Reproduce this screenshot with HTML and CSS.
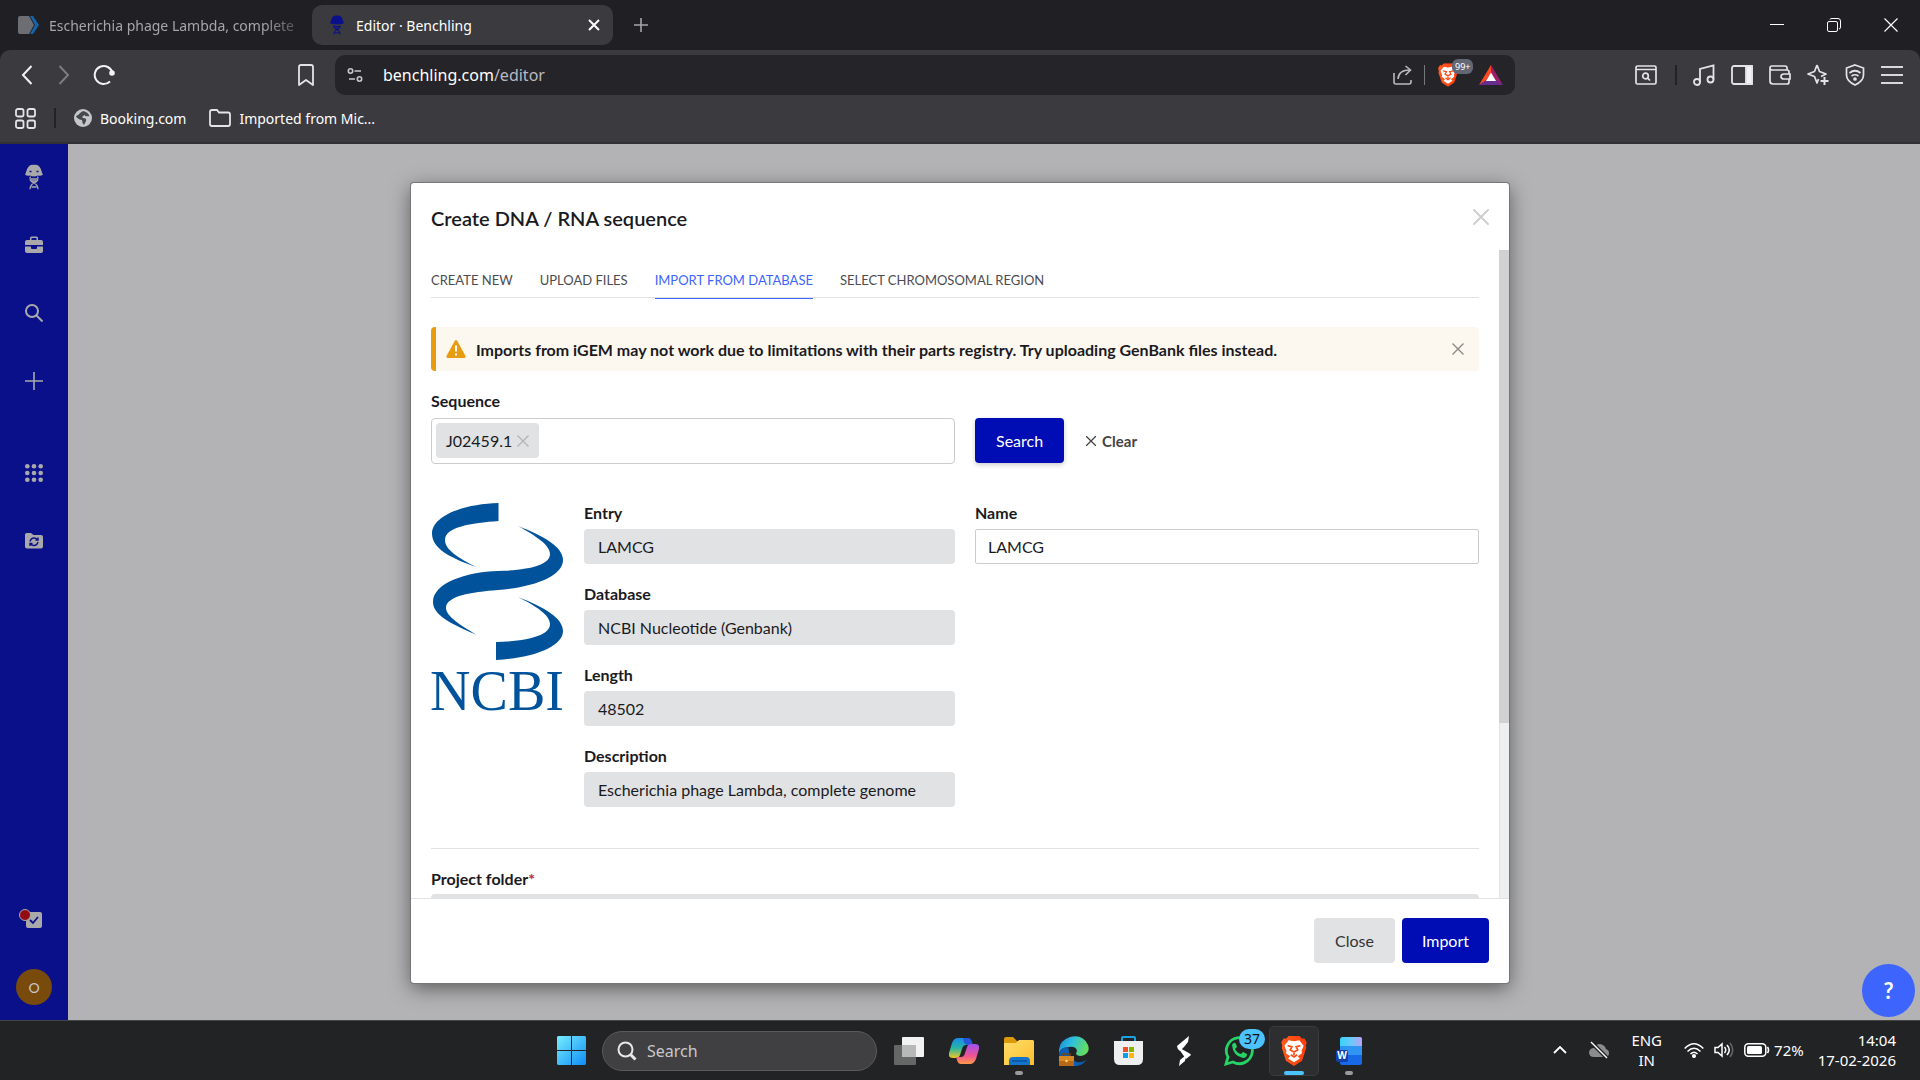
FILE: index.html
```
<!DOCTYPE html>
<html lang="en">
<head>
  <meta charset="utf-8">
  <title>Editor · Benchling</title>
  <link rel="stylesheet" href="styles.css">
</head>
<body>
  <!-- Browser tabs -->
  <header class="browser">
    <div class="tabs-row">
      <div class="tab">
        <svg class="tab-icon" width="22" height="20" viewBox="0 0 22 20"><path d="M2 1h9l5 9-5 9H2a2 2 0 0 1-2-2V3a2 2 0 0 1 2-2z" fill="#6d6e73"/><path d="M12 1h3l6 9-6 9h-3l5-9z" fill="#1763a8"/></svg>
        <span class="tab-title faded">Escherichia phage Lambda, complete</span>
      </div>
      <div class="tab active">
        <svg class="tab-icon" width="14" height="20" viewBox="0 0 18 25"><use href="#phage"/></svg>
        <span class="tab-title">Editor · Benchling</span>
        <button class="plain" aria-label="Close tab"><svg width="12" height="12" viewBox="0 0 12 12" stroke="#fff" stroke-width="2"><path d="M1 1l10 10M11 1L1 11"/></svg></button>
      </div>
      <button class="plain new-tab" aria-label="New tab"><svg width="14" height="14" viewBox="0 0 14 14" stroke="#a5a5aa" stroke-width="1.600"><path d="M7 0v14M0 7h14"/></svg></button>
      <div class="window-buttons">
        <button class="plain" aria-label="Minimize"><svg width="14" height="14" viewBox="0 0 14 14" stroke="#fff"><path d="M0 6.500h14"/></svg></button>
        <button class="plain" aria-label="Restore"><svg width="14" height="14" viewBox="0 0 14 14" stroke="#fff" fill="none"><rect x=".5" y="3.500" width="10" height="10" rx="1.500"/><path d="M3 1.500Q3 .5 5 .5h6q2.500 0 2.500 2.500v6q0 2-1.500 2"/></svg></button>
        <button class="plain" aria-label="Close"><svg width="14" height="14" viewBox="0 0 14 14" stroke="#fff" stroke-width="1.200"><path d="M.5.5l13 13M13.500.5l-13 13"/></svg></button>
      </div>
    </div>

    <!-- Address bar -->
    <div class="toolbar">
      <div class="nav-buttons">
        <button class="plain" aria-label="Back"><svg width="12" height="20" viewBox="0 0 12 20" fill="none" stroke="#f2f2f4" stroke-width="2"><path d="M10.500 1L2 10l8.500 9"/></svg></button>
        <button class="plain" aria-label="Forward"><svg width="12" height="20" viewBox="0 0 12 20" fill="none" stroke="#7b7b80" stroke-width="2"><path d="M2.500 1L11 10l-8.500 9"/></svg></button>
        <button class="plain" aria-label="Reload"><svg width="22" height="22" viewBox="0 0 22 22" fill="none" stroke="#f2f2f4" stroke-width="2"><path d="M17 17.500A9 9 0 1 1 19.500 9"/><circle cx="19" cy="9" r="1.800" fill="#f2f2f4"/></svg></button>
      </div>
      <button class="plain bookmark" aria-label="Bookmark"><svg width="16" height="22" viewBox="0 0 16 22" fill="none" stroke="#e4e4e8" stroke-width="1.800"><path d="M1 3q0-2 2-2h10q2 0 2 2v18l-7-5-7 5z" stroke-linejoin="round"/></svg></button>
      <div class="address">
        <svg width="16" height="14" viewBox="0 0 16 14" fill="none" stroke="#c8c8cd" stroke-width="1.600"><circle cx="3.500" cy="3" r="2.200"/><path d="M7.500 3H14M2 11h6"/><circle cx="12.500" cy="11" r="2.200"/></svg>
        <div class="url">benchling.com<span>/editor</span></div>
        <svg width="20" height="20" viewBox="0 0 20 20" fill="none" stroke="#b9b9bf" stroke-width="1.600"><path d="M1 8v9q0 2 2 2h13q2 0 2-2v-2M5 14Q5.500 5 17 5M12.500 1L17.500 5l-5 5"/></svg>
        <i class="rule light"></i>
        <div class="shield">
          <svg width="20" height="24" viewBox="0 0 24 28"><use href="#brave"/></svg>
          <span class="shield-count">99+</span>
        </div>
        <svg width="24" height="20" viewBox="0 0 24 20"><path d="M12 0L0 20l7-4 5-8z" fill="#ff4724"/><path d="M12 0l12 20-7-4-5-8z" fill="#9e1f63"/><path d="M0 20h24l-7-5H7z" fill="#662d91"/><path d="M12 7.500L7 16h10z" fill="#fff"/></svg>
      </div>
      <div class="extensions">
        <svg width="22" height="20" viewBox="0 0 22 20" fill="none" stroke="#e4e4e8" stroke-width="1.700"><rect x="1" y="1" width="20" height="18" rx="1.500"/><path d="M1 4.500h20M12.500 13l2.500 2.500"/><circle cx="10.500" cy="11" r="2.800"/></svg>
        <i class="rule"></i>
        <svg width="22" height="22" viewBox="0 0 22 22" fill="none" stroke="#e4e4e8" stroke-width="1.800"><circle cx="4" cy="18" r="3"/><circle cx="17.500" cy="15.500" r="3"/><path d="M7 18V5l13.500-3.500v14"/></svg>
        <svg width="22" height="20" viewBox="0 0 22 20" fill="none" stroke="#e4e4e8" stroke-width="1.800"><rect x="1" y="1" width="20" height="18" rx="2"/><path d="M15 1h6v18h-6z" fill="#f2f2f4"/></svg>
        <svg width="22" height="20" viewBox="0 0 22 20" fill="none" stroke="#e4e4e8" stroke-width="1.700"><path d="M1 4v12q0 3 3 3h14q2 0 2-2v-3M20 9V7q0-2-2-2H3Q1 5 1 3t2-2h13q2 0 2 2v2M21 9h-6q-3 0-3 2.500t3 2.500h6z"/></svg>
        <svg width="22" height="22" viewBox="0 0 22 22" fill="none" stroke="#e4e4e8" stroke-width="1.700" stroke-linejoin="round"><path d="M10 1l2.500 6.500L19 10l-5 2.500M10 1L7.500 7.500 1 10l6.500 2.500L10 19l1.500-4"/><path d="M17.500 13v8M13.500 17h8" stroke-width="2"/></svg>
        <svg width="20" height="22" viewBox="0 0 20 22" fill="none" stroke="#e4e4e8" stroke-width="1.700"><path d="M10 1l8.500 3v7q0 6-8.500 10Q1.500 17 1.500 11V4z"/><path d="M4.500 9q5.500-4.500 11 0M6.500 12q3.500-2.500 7 0"/><circle cx="10" cy="15" r="1" fill="#e4e4e8"/></svg>
        <svg width="22" height="18" viewBox="0 0 22 18" stroke="#d8d8dc" stroke-width="2"><path d="M0 1h22M0 9h22M0 17h22"/></svg>
      </div>
    </div>

    <nav class="bookmarks">
      <svg width="21" height="21" viewBox="0 0 21 21" fill="none" stroke="#e4e4e8" stroke-width="1.800"><rect x="1" y="1" width="7.500" height="7.500" rx="1.800"/><rect x="12.500" y="1" width="7.500" height="7.500" rx="1.800"/><rect x="1" y="12.500" width="7.500" height="7.500" rx="1.800"/><rect x="12.500" y="12.500" width="7.500" height="7.500" rx="1.800"/></svg>
      <i class="rule"></i>
      <a href="#"><svg width="18" height="18" viewBox="0 0 18 18"><circle cx="9" cy="9" r="9" fill="#c3c6ca"/><path d="M9 2q5 1 6.500 5-4 1-5-1Q7 8 9 9q4 0 3 3l-2 4q-2-2-2-5-5-1-6-4 3-1 4-3z" fill="#47484d"/></svg>Booking.com</a>
      <a href="#"><svg width="22" height="18" viewBox="0 0 22 18" fill="none" stroke="#e4e4e8" stroke-width="1.800"><path d="M1 3q0-2 2-2h5l2 2.500h9q2 0 2 2V15q0 2-2 2H3q-2 0-2-2z"/></svg>Imported from Mic...</a>
    </nav>
  </header>

  <!-- Benchling -->
  <div class="app">
    <nav class="sidebar">
      <a href="#" aria-label="Home"><svg width="18" height="26" viewBox="0 0 18 25"><use href="#phage"/></svg></a>
      <a href="#" aria-label="Projects"><svg width="18" height="18" viewBox="0 0 18 18" fill="currentColor"><path d="M5 4V2q0-1.500 1.500-1.500h5Q13 .5 13 2v2h3q2 0 2 2v3H0V6q0-2 2-2zm1.500 0h5V2h-5zM0 10.500h6V12q0 1 1 1h4q1 0 1-1v-1.500h6V15q0 2-2 2H2q-2 0-2-2z"/></svg></a>
      <a href="#" aria-label="Search"><svg width="18" height="18" viewBox="0 0 18 18" fill="none" stroke="currentColor" stroke-width="2"><circle cx="7" cy="7" r="6"/><path d="M11.500 11.500l6 6"/></svg></a>
      <a href="#" aria-label="Create"><svg width="18" height="18" viewBox="0 0 18 18" stroke="currentColor" stroke-width="1.600"><path d="M9 0v18M0 9h18"/></svg></a>
      <a href="#" aria-label="Apps" class="spaced"><svg width="18" height="18" viewBox="0 0 18 18" fill="currentColor"><circle cx="2.300" cy="2.300" r="2.300"/><circle cx="9" cy="2.300" r="2.300"/><circle cx="15.700" cy="2.300" r="2.300"/><circle cx="2.300" cy="9" r="2.300"/><circle cx="9" cy="9" r="2.300"/><circle cx="15.700" cy="9" r="2.300"/><circle cx="2.300" cy="15.700" r="2.300"/><circle cx="9" cy="15.700" r="2.300"/><circle cx="15.700" cy="15.700" r="2.300"/></svg></a>
      <a href="#" aria-label="Synced folders"><svg width="18" height="18" viewBox="0 0 18 18"><path d="M0 2.500Q0 1 1.500 1H6l2.500 2H16q2 0 2 2v9.500q0 2-2 2H2q-2 0-2-2z" fill="currentColor"/><path d="M5 9.500Q6 6 9 6q2 0 3.500 1.500M13 10q-1 3.500-4 3.500-2 0-3.500-1.500M13 5.500V8h-2.500M5 14v-2.500h2.500" fill="none" stroke="#0a1089" stroke-width="1.400"/></svg></a>
      <a href="#" aria-label="Tasks" class="tasks"><svg width="16" height="16" viewBox="0 0 16 16"><rect width="16" height="16" rx="2" fill="currentColor"/><path d="M4 8l3 3 5-6" fill="none" stroke="#0a1089" stroke-width="1.800"/></svg></a>
      <button class="avatar">O</button>
    </nav>

    <main class="stage">
      <section class="modal" role="dialog" aria-labelledby="modal-title">
        <div class="modal-header">
          <h1 id="modal-title">Create DNA / RNA sequence</h1>
          <button class="plain" aria-label="Close dialog"><svg width="16" height="16" viewBox="0 0 16 16" stroke="#ccc" stroke-width="1.800" stroke-linecap="round"><path d="M1 1l14 14M15 1L1 15"/></svg></button>
        </div>

        <div class="modal-middle">
          <div class="modal-body">
            <nav class="modal-tabs">
              <a href="#">CREATE NEW</a>
              <a href="#">UPLOAD FILES</a>
              <a href="#" class="selected">IMPORT FROM DATABASE</a>
              <a href="#">SELECT CHROMOSOMAL REGION</a>
            </nav>

            <div class="alert">
              <svg width="20" height="18" viewBox="0 0 20 18"><path d="M8.700 1q1.300-2 2.600 0l8 14.500q1 2.500-1.300 2.500H2Q-.3 18 .7 15.500z" fill="#e89c12"/><path d="M10 5.500v6M10 13.500v2" stroke="#fff" stroke-width="2"/></svg>
              <p>Imports from iGEM may not work due to limitations with their parts registry. Try uploading GenBank files instead.</p>
              <button class="plain" aria-label="Dismiss"><svg width="12" height="12" viewBox="0 0 12 12" stroke="#8d8a85" stroke-width="1.400"><path d="M.5.5l11 11M11.500.5l-11 11"/></svg></button>
            </div>

            <label for="sequence">Sequence</label>
            <div class="columns">
              <div class="token-box">
                <span class="token">J02459.1 <svg width="12" height="12" viewBox="0 0 12 12" stroke="#b4b4b6" stroke-width="1.300"><path d="M.5.5l11 11M11.500.5l-11 11"/></svg></span>
                <input type="text" id="sequence">
              </div>
              <div class="search-actions">
                <button class="btn primary raised">Search</button>
                <button class="plain clear"><svg width="10" height="10" viewBox="0 0 10 10" stroke="#444" stroke-width="1.300"><path d="M0 0l10 10M10 0L0 10"/></svg>Clear</button>
              </div>
            </div>

            <div class="columns result">
              <div class="entry">
                <svg class="ncbi" width="133" height="226" viewBox="0 0 133 226" fill="#00529b">
                  <path d="M67.500 1V19C40 21 14 25 14 38c0 10 14 18 31 27C20 56 1 47 1 31.500 1 14 32 2 67.500 1z"/>
                  <path d="M87 24c26 10 45 21 45 34 0 16-28 27-65 30C40 90 15 94 15 106c0 8 14 17 31 27C20 122 2 113 2 100 2 81 35 70 67 69c32-1 52-6 52-17 0-9-14-18-32-28z"/>
                  <path d="M87 95c26 10 45 21 45 34 0 15-28 27-67 29V140c34-1 54-7 54-18 0-9-14-18-32-27z"/>
                  <text x="66" y="208" text-anchor="middle">NCBI</text>
                </svg>
                <div class="fields">
                  <div class="field"><label for="entry">Entry</label><input type="text" id="entry" value="LAMCG" readonly></div>
                  <div class="field"><label for="database">Database</label><input type="text" id="database" value="NCBI Nucleotide (Genbank)" readonly></div>
                  <div class="field"><label for="length">Length</label><input type="text" id="length" value="48502" readonly></div>
                  <div class="field"><label for="description">Description</label><input type="text" id="description" value="Escherichia phage Lambda, complete genome" readonly></div>
                </div>
              </div>
              <div class="field"><label for="name">Name</label><input type="text" id="name" value="LAMCG"></div>
            </div>

            <div class="project field">
              <label for="project">Project folder<span>*</span></label>
              <input type="text" id="project" readonly>
            </div>
          </div>
          <div class="scrollbar"><div class="thumb"></div></div>
        </div>

        <div class="modal-footer">
          <button class="btn">Close</button>
          <button class="btn primary">Import</button>
        </div>
      </section>
      <button class="help" aria-label="Help">?</button>
    </main>
  </div>

  <!-- Windows taskbar -->
  <footer class="taskbar">
    <div class="apps">
      <button class="app-icon" aria-label="Start"><svg width="29" height="29" viewBox="0 0 29 29" fill="url(#win)"><path d="M1 0h13v14H0V1zM15 0h13l1 1v13H15zM0 15h14v14H1l-1-1zM15 15h14v13l-1 1H15z"/></svg></button>
      <div class="task-search">
        <svg width="20" height="20" viewBox="0 0 20 20" fill="none" stroke="#e8e8ea" stroke-width="2"><circle cx="8.500" cy="8.500" r="7"/><path d="M13.500 13.500l5 5" stroke-width="3"/></svg>
        <input type="text" placeholder="Search" aria-label="Search">
      </div>
      <button class="app-icon" aria-label="Task view"><svg width="30" height="28" viewBox="0 0 30 28"><rect x="8" width="22" height="20" rx="1" fill="#f2f2f2"/><rect y="8" width="22" height="20" rx="1" fill="#777" opacity=".8"/><path d="M8 8h14v12H8z" fill="#b8b8b8"/></svg></button>
      <button class="app-icon" aria-label="Copilot"><svg width="30" height="28" viewBox="0 0 30 28"><path d="M9 1h9q3 0 4 4l1 3h-6q-3 0-4 4l-2 6q-1 3-4 3H4q-5 0-4-5L3 6q2-5 6-5z" fill="url(#cop1)"/><path d="M14 1h5q3 0 4 4l1 3h-5q-3 0-4-3z" fill="#2557d8"/><path d="M21 27h-9q-3 0-4-4l-1-3h5q3 0 4-4l2-6q1-3 4-3h4q5 0 4 5l-3 10q-2 5-6 5z" fill="url(#cop2)"/></svg></button>
      <button class="app-icon open" aria-label="File Explorer"><svg width="30" height="28" viewBox="0 0 30 28"><path d="M0 2q0-2 2-2h7l4 4h17v8H0z" fill="#dc9a08"/><path d="M0 6h12l3-3h14l1 1v24H0z" fill="url(#fold)"/><path d="M5 28v-4q0-4 4-4h13q4 0 4 4v4z" fill="#1374ca"/><path d="M8 24h15" stroke="#07529a" stroke-width="1.500"/></svg></button>
      <button class="app-icon" aria-label="Edge"><svg width="30" height="30" viewBox="0 0 30 30"><path d="M0 17Q-1 5 11 1 24-2 29 9q3 9-7 11-7 0-4-5-1-5-8-4Q2 11 0 17z" fill="url(#edge)"/><path d="M10 15q-1 9 8 11 6 1 10-3-5 8-14 7Q1 28 0 17q2-6 9-6z" fill="#0b60b5"/><path d="M0 20h15v10H0z" fill="#b96818"/><path d="M4 20v-2h7v2" fill="none" stroke="#7d4010" stroke-width="1.500"/><path d="M0 20h15v5H0z" fill="#d88725"/><circle cx="7.500" cy="25" r="1.200" fill="#ffe25a"/></svg></button>
      <button class="app-icon" aria-label="Microsoft Store"><svg width="29" height="30" viewBox="0 0 29 30"><path d="M8 7V2q0-1 1-1h11q1 0 1 1v5" fill="none" stroke="#19a3e4" stroke-width="2"/><path d="M0 5h29v18q0 6-6 6H6q-6 0-6-6z" fill="#efefef"/><path d="M9 11h5v5H9z" fill="#f04e23"/><path d="M15 11h5v5h-5z" fill="#7db700"/><path d="M9 17h5v5H9z" fill="#0a9fe8"/><path d="M15 17h5v5h-5z" fill="#fdb90a"/></svg></button>
      <button class="app-icon" aria-label="Notes"><svg width="14" height="30" viewBox="0 0 14 30" fill="#fff"><path d="M12 0L11 6 7 11 3 15Q0 13 0 10zM1 11L10 16q4 2 4 3L9 23 4 16zM2 30L3 24l6-5-1 6z"/></svg></button>
      <button class="app-icon" aria-label="WhatsApp"><svg width="30" height="30" viewBox="0 0 30 30"><path d="M2 28l2-7a13 13 0 1 1 5 5z" fill="none" stroke="#25d366" stroke-width="2.800"/><path d="M8 9q2-4 4-1l1 3-2 2q2 4 6 5l2-2 4 2q0 4-4 4Q9 20 8 9z" fill="#25d366"/></svg><span class="badge">37</span></button>
      <button class="app-icon current" aria-label="Brave"><svg width="26" height="30" viewBox="0 0 24 28"><use href="#brave"/></svg></button>
      <button class="app-icon open" aria-label="Word"><svg width="26" height="28" viewBox="0 0 26 28"><path d="M7 0h17q2 0 2 2v24q0 2-2 2H6q-2 0-2-2V3q0-3 3-3z" fill="#1769e8"/><path d="M7 0h17q2 0 2 2v8H4V3q0-3 3-3z" fill="url(#word)"/><path d="M4 9h22v9H4z" fill="#2f94f2"/><rect y="13" width="12" height="12" rx="2" fill="#123fae"/><text class="word-letter" x="6" y="22" text-anchor="middle">W</text></svg></button>
    </div>
    <div class="tray">
      <svg width="14" height="8" viewBox="0 0 14 8" fill="none" stroke="#fff" stroke-width="1.800"><path d="M1 7l6-6 6 6"/></svg>
      <svg width="20" height="18" viewBox="0 0 20 18"><path d="M5 16q-5 0-5-5 1-4 5-4 2-4 6-4 5 1 6 5 3 1 3 4 0 4-4 4z" fill="#8b8c8e"/><path d="M2 1l16 16" stroke="#222325" stroke-width="4"/><path d="M2 1l16 16" stroke="#fff" stroke-width="1.400"/></svg>
      <div class="lang">ENG<br>IN</div>
      <div class="status">
        <svg width="20" height="16" viewBox="0 0 20 16" fill="none" stroke="#fff" stroke-width="1.500"><path d="M.7 6.500q9.300-9.500 18.600 0M3.500 9.500q6.500-6.500 13 0M6.500 12q3.500-3.500 7 0"/><circle cx="10" cy="14" r="1.300" fill="#fff"/></svg>
        <svg width="20" height="16" viewBox="0 0 20 16" fill="none" stroke="#fff" stroke-width="1.500"><path d="M1 5.500h3L8 2v12l-4-3.500H1zM10.500 5q2.500 3 0 6M13 3q4.500 5 0 10"/><path d="M16 1q5.500 7 0 14" stroke="#666"/></svg>
        <svg width="26" height="14" viewBox="0 0 26 14"><rect x=".8" y=".8" width="21" height="12.400" rx="3.500" fill="none" stroke="#fff" stroke-width="1.500"/><rect x="3" y="3" width="15" height="8" rx="1.500" fill="#fff"/><path d="M23.500 4q2 3 0 6" stroke="#fff" stroke-width="1.600" fill="none"/></svg>
        <span>72%</span>
      </div>
      <div class="clock">14:04<br>17-02-2026</div>
    </div>
  </footer>

  <!-- shared shapes -->
  <svg class="defs" width="0" height="0">
    <defs>
      <linearGradient id="win" x1="0" y1="0" x2="1" y2="1"><stop offset="0" stop-color="#76eeff"/><stop offset="1" stop-color="#0f8cf5"/></linearGradient>
      <linearGradient id="fold" x1="0" y1="0" x2="1" y2="1"><stop offset="0" stop-color="#ffdd6b"/><stop offset="1" stop-color="#fcbf2d"/></linearGradient>
      <linearGradient id="edge" x1="0" y1="0" x2="1" y2=".3"><stop offset="0" stop-color="#1a86d9"/><stop offset=".5" stop-color="#2fc1dc"/><stop offset="1" stop-color="#62dc62"/></linearGradient>
      <linearGradient id="word" x1="0" y1="0" x2="1" y2="0"><stop offset="0" stop-color="#35d3fb"/><stop offset=".5" stop-color="#6bc9fa"/><stop offset="1" stop-color="#b7a4f5"/></linearGradient>
      <linearGradient id="cop1" x1="0" y1="0" x2="0" y2="1"><stop offset="0" stop-color="#1a8bea"/><stop offset=".5" stop-color="#27b5a5"/><stop offset="1" stop-color="#f0c820"/></linearGradient>
      <linearGradient id="cop2" x1="0" y1="0" x2="0" y2="1"><stop offset="0" stop-color="#a050f0"/><stop offset=".6" stop-color="#f0558f"/><stop offset="1" stop-color="#ff9a4a"/></linearGradient>
      <linearGradient id="lion" x1="0" y1="0" x2="1" y2="0"><stop offset="0" stop-color="#ff5a1f"/><stop offset="1" stop-color="#ff3d0c"/></linearGradient>
      <symbol id="phage" viewBox="0 0 18 25"><path d="M0 10C2 8 1 0 9 0s7 8 9 10q-2 2-5 1-4 2-8 0-3 1-5-1z" fill="currentColor"/><path d="M4.500 7h2M11.500 7h2" stroke="#0a1089" stroke-width="1.300"/><path d="M5.500 12q-2 4 3.500 6.500 4 2 4 6.500M12.500 12q2 4-3.500 6.500-4 2-4 6.500M6 14.500h6M6.500 16.500h5M6.500 22.500h5" fill="none" stroke="currentColor" stroke-width="1.300"/></symbol>
      <symbol id="brave" viewBox="0 0 24 28"><path d="M7 0h10l2.500 2.500 2-.5L24 6l-1 3 .5 2-4 12L12 28l-7.500-5-4-12L1 9 0 6l2.500-4 2 .5z" fill="url(#lion)"/><path d="M7 4l5 1 5-1 4 5-2 5 .5 2-4 3 2 2-5.500 3.500L6.500 21l2-2-4-3 .5-2-2-5z" fill="#fff"/><path d="M6 9l4 1-1.500 3L12 15l3.500-2L14 10l4-1M12 15v3M9 17.500l3 2 3-2" fill="none" stroke="#ff4b16" stroke-width="1.600"/></symbol>
    </defs>
  </svg>
</body>
</html>
```
FILE: styles.css
```
* {
  box-sizing: border-box;
}

body {
  margin: 0;
  height: 100vh;
  display: flex;
  flex-direction: column;
  overflow: hidden;
  font-family: Lato, "Liberation Sans", sans-serif;
  font-size: 16px;
  color: #1a1a1f;
}

a {
  color: inherit;
  text-decoration: none;
}

button, input {
  font: inherit;
  color: inherit;
}

svg {
  display: block;
  flex: none;
}

.defs {
  position: absolute;
}

.plain {
  display: flex;
  align-items: center;
  padding: 0;
  border: 0;
  background: none;
}

/* browser */
.browser, .taskbar {
  font-family: "Noto Sans", "Open Sans", sans-serif;
}

.browser {
  background: #201f24;
  color: #fff;
  font-size: 14px;
}

.tabs-row {
  height: 50px;
  display: flex;
  align-items: center;
}

.tab {
  height: 40px;
  width: 312px;
  padding: 0 12px 0 18px;
  display: flex;
  align-items: center;
  gap: 9px;
  color: #a5a5aa;
}

.tab.active {
  width: 301px;
  padding-right: 13px;
  gap: 12px;
  border-radius: 10px;
  background: #3b3a3f;
  color: #fff;
}

.tab.active .tab-icon {
  color: #0a1089;
}

.tab-title {
  flex: 1;
  white-space: nowrap;
}

.faded {
  mask-image: linear-gradient(to right, #000 85%, rgba(0, 0, 0, .3));
}

.new-tab {
  margin-left: 21px;
}

.window-buttons {
  margin-left: auto;
  padding-right: 22px;
  display: flex;
  gap: 43px;
}

.toolbar {
  height: 50px;
  display: flex;
  align-items: center;
  background: #3b3a3f;
  border-radius: 10px 10px 0 0;
}

.nav-buttons {
  padding-left: 21px;
  width: 298px;
  display: flex;
  align-items: center;
  gap: 24px;
}

.bookmark {
  width: 37px;
}

.address {
  width: 1180px;
  height: 40px;
  padding: 0 12px;
  display: flex;
  align-items: center;
  gap: 11px;
  border-radius: 10px;
  background: #252429;
}

.url {
  flex: 1;
  margin-left: 9px;
  font-size: 16px;
}

.url span {
  color: #b9b9bf;
}

.rule {
  width: 2px;
  height: 20px;
  background: #232227;
}

.rule.light {
  width: 1px;
  background: #77777d;
}

.shield {
  position: relative;
  width: 32px;
  padding-left: 2px;
}

.shield-count {
  position: absolute;
  top: -4px;
  left: 16px;
  padding: 0 3px;
  border-radius: 6px;
  background: #636674;
  font-size: 9px;
  line-height: 15px;
}

.extensions {
  margin-left: auto;
  padding-right: 17px;
  display: flex;
  align-items: center;
  gap: 16px;
}

.extensions .rule {
  margin: 0 0 0 2px;
}

.bookmarks {
  height: 44px;
  padding: 0 15px 6px;
  display: flex;
  align-items: center;
  gap: 18px;
  background: #3b3a3f;
  border-bottom: 2px solid #323136;
}

.bookmarks a {
  display: flex;
  align-items: center;
  gap: 8px;
  margin-right: 5px;
}

/* app */
.app {
  flex: 1;
  min-height: 0;
  display: flex;
}

.sidebar {
  width: 68px;
  padding: 20px 0 15px;
  display: flex;
  flex-direction: column;
  align-items: center;
  background: #0a1089;
  color: #a9a9ab;
}

.sidebar a {
  position: relative;
  height: 26px;
  margin-bottom: 42px;
  display: flex;
  align-items: center;
}

.sidebar .spaced {
  margin-top: 24px;
}

.sidebar .tasks {
  margin-top: auto;
  margin-bottom: 36px;
}

.tasks::before {
  content: '';
  position: absolute;
  top: 2px;
  left: -7px;
  width: 10px;
  height: 10px;
  border: 1px solid #a9a9ab;
  border-radius: 50%;
  background: #930b13;
}

.avatar {
  width: 36px;
  height: 36px;
  padding: 0;
  border: 0;
  border-radius: 50%;
  background: #784a0c;
  color: #c9c9c9;
  font-size: 14px;
}

.stage {
  position: relative;
  flex: 1;
  padding: 39px 68px 37px 0;
  display: flex;
  justify-content: center;
  background: #b3b3b5;
}

.modal {
  width: 1098px;
  max-width: 90%;
  display: flex;
  flex-direction: column;
  border-radius: 3px;
  background: #fff;
  box-shadow: 0 0 0 1px #777, 0 5px 20px rgba(0, 0, 0, .5);
}

.modal-header {
  height: 67px;
  padding: 0 20px;
  display: flex;
  align-items: center;
  justify-content: space-between;
}

h1 {
  margin: 2px 0 0;
  font-size: 20px;
  font-weight: 600;
}

.modal-middle {
  flex: 1;
  min-height: 0;
  display: flex;
}

.modal-body {
  flex: 1;
  padding: 13px 20px 0;
  overflow: hidden;
}

.scrollbar {
  width: 10px;
  border-left: 1px solid #e1e2e4;
  background: #edeff1;
}

.thumb {
  height: 73%;
  margin-left: -1px;
  background: #d1d1d3;
}

.modal-tabs {
  display: flex;
  gap: 27px;
  border-bottom: 1px solid #e1e2e4;
  color: #4c4c50;
  font-size: 13px;
  line-height: 35px;
}

.modal-tabs a {
  margin-bottom: -2px;
  border-bottom: 1px solid transparent;
}

.modal-tabs .selected {
  color: #3d65fd;
  border-color: #3d65fd;
}

.alert {
  height: 44px;
  margin: 29px 0 19px;
  padding: 0 15px 0 10px;
  display: flex;
  align-items: center;
  gap: 10px;
  border-left: 5px solid #e89c12;
  border-radius: 4px;
  background: #fdf8ef;
  font-weight: 700;
}

.alert p {
  flex: 1;
  margin: 0;
}

label {
  display: block;
  font-weight: 700;
  line-height: 22px;
}

.columns {
  display: grid;
  grid-template-columns: 50% 1fr;
  column-gap: 20px;
}

.token-box {
  height: 46px;
  margin-top: 6px;
  padding: 4px;
  display: flex;
  border: 1px solid #ccc;
  border-radius: 4px;
}

.token {
  height: 35px;
  padding: 0 10px;
  display: flex;
  align-items: center;
  gap: 5px;
  border-radius: 4px;
  background: #e1e2e4;
}

.token-box input {
  flex: 1;
  min-width: 0;
  border: 0;
  outline: 0;
}

.search-actions {
  margin-top: 6px;
  display: flex;
  align-items: flex-start;
  gap: 22px;
}

.btn {
  height: 45px;
  padding: 0 21px;
  border: 0;
  border-radius: 4px;
  background: #e1e2e4;
  color: #333;
}

.btn.primary {
  padding: 0 20px;
  background: #000cb4;
  color: #fff;
}

.btn.raised {
  padding: 0 21px;
  box-shadow: 0 2px 5px rgba(0, 0, 0, .2);
}

.clear {
  height: 45px;
  gap: 6px;
  color: #444;
  font-size: 15px;
  font-weight: 700;
}

.result {
  margin-top: 38px;
}

.entry {
  display: flex;
  align-items: flex-start;
  gap: 20px;
}

.fields {
  flex: 1;
}

.ncbi text {
  font: 56px "Liberation Serif", serif;
}

.field {
  margin-bottom: 19px;
}

.field label {
  margin-bottom: 5px;
}

.field input {
  display: block;
  width: 100%;
  height: 35px;
  padding: 0 12px;
  border: 1px solid #ccc;
  border-radius: 2px;
  outline: 0;
}

.field input[readonly] {
  padding: 0 14px;
  border: 0;
  border-radius: 4px;
  background: #e1e2e4;
}

.project {
  margin: 22px 0 20px;
  padding-top: 19px;
  border-top: 1px solid #e1e2e4;
}

.project label {
  margin-bottom: 4px;
}

.project span {
  color: #c0272d;
}

.modal-footer {
  height: 85px;
  padding: 19px 20px;
  display: flex;
  justify-content: flex-end;
  gap: 7px;
  border-top: 1px solid #e1e2e4;
}

.help {
  position: absolute;
  right: 5px;
  bottom: 3px;
  width: 53px;
  height: 53px;
  border: 0;
  border-radius: 50%;
  background: #3d65fd;
  color: #fff;
  font-size: 22px;
  font-weight: 700;
}

/* taskbar */
.taskbar {
  position: relative;
  height: 60px;
  display: flex;
  align-items: center;
  justify-content: center;
  border-top: 1px solid #444;
  background: #222325;
  color: #fff;
  font-size: 15px;
}

.apps {
  display: flex;
  align-items: center;
}

.app-icon {
  position: relative;
  width: 55px;
  height: 50px;
  padding: 0;
  display: flex;
  align-items: center;
  justify-content: center;
  border: 0;
  border-radius: 5px;
  background: none;
}

.app-icon.open::after, .app-icon.current::after {
  content: '';
  position: absolute;
  bottom: 1px;
  width: 8px;
  height: 4px;
  border-radius: 2px;
  background: #9a9a9c;
}

.app-icon.current {
  width: 50px;
  margin: 0 2px 0 3px;
  border: 1px solid #3a3b3d;
  background: #2d2e30;
}

.app-icon.current::after {
  bottom: 0;
  width: 20px;
  background: #4cc2ff;
}

.badge {
  position: absolute;
  top: 3px;
  right: 1px;
  width: 26px;
  border-radius: 10px;
  background: #4cc2ff;
  color: #111;
  font-size: 14px;
  line-height: 20px;
}

.word-letter {
  fill: #fff;
  font-size: 10px;
  font-weight: 700;
}

.task-search {
  width: 275px;
  height: 40px;
  margin: 0 4px 0 3px;
  padding: 0 14px;
  display: flex;
  align-items: center;
  gap: 10px;
  border: 1px solid #5a5a5c;
  border-radius: 20px;
  background: #404042;
  font-size: 16px;
}

.task-search input {
  flex: 1;
  min-width: 0;
  padding: 0;
  border: 0;
  outline: 0;
  background: none;
}

.task-search input::placeholder {
  color: #c8c8ca;
}

.tray {
  position: absolute;
  right: 24px;
  padding-bottom: 2px;
  display: flex;
  align-items: center;
  gap: 22px;
  line-height: 20px;
}

.lang {
  text-align: center;
}

.status {
  display: flex;
  align-items: center;
  gap: 10px;
}

.status span {
  margin-left: -6px;
}

.clock {
  margin-left: -8px;
  text-align: right;
}
```
